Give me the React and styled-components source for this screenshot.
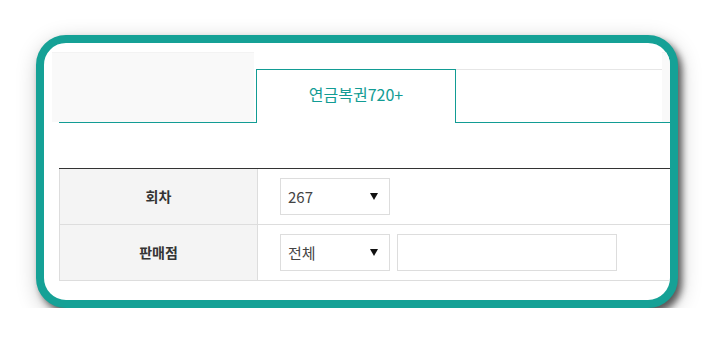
import React from "react";
import styled, { createGlobalStyle } from "styled-components";

const GlobalStyle = createGlobalStyle`
  html, body {
    margin: 0;
    padding: 0;
    background: #fff;
    font-family: "Noto Sans CJK KR", "Noto Sans", sans-serif;
  }
`;

const Page = styled.div`
  padding: 35px 0 0 36px;
`;

const Frame = styled.div`
  box-sizing: border-box;
  width: 642px;
  height: 273px;
  border: 8px solid #15a196;
  border-radius: 30px;
  background: #fff;
  overflow: hidden;
  box-shadow: 4px 5px 7px rgba(0, 0, 0, 0.6), 2px 6px 22px rgba(0, 0, 0, 0.22);
`;

const Inner = styled.div`
  width: 720px;
  padding: 9px 0 0 15px;
`;

const TabList = styled.ul`
  display: flex;
  align-items: flex-end;
  height: 70px;
  margin: 0;
  padding: 0;
  list-style: none;
  border-bottom: 1px solid #129c94;
`;

const Tab = styled.li`
  box-sizing: border-box;
  flex: none;
  display: flex;
  align-items: center;
  justify-content: center;
  padding-bottom: 5px;
  font-size: 16px;
  color: ${(p) => (p.$active ? "#129c94" : "#666")};
  background: ${(p) => (p.$muted ? "#f9f9f9" : "#fff")};
  ${(p) =>
    p.$active
      ? `
    height: 54px;
    margin-bottom: -1px;
    border: 1px solid #129c94;
    border-bottom: none;
  `
      : p.$muted
      ? `
    height: 70px;
    border-top: 1px solid #f3f3f3;
  `
      : `
    height: 53px;
    border-top: 1px solid #e6e6e6;
  `}
`;

const FormTable = styled.div`
  margin-top: 45px;
  border-top: 1px solid #333;
`;

const Row = styled.div`
  display: flex;
  height: 56px;
  box-sizing: border-box;
  border-bottom: 1px solid #ddd;
`;

const Label = styled.div`
  box-sizing: border-box;
  width: 199px;
  display: flex;
  align-items: center;
  justify-content: center;
  padding-bottom: 2px;
  background: #f4f4f4;
  border-left: 1px solid #ddd;
  border-right: 1px solid #ddd;
  font-size: 14px;
  font-weight: 700;
  color: #333;
`;

const Cell = styled.div`
  display: flex;
  align-items: center;
  gap: 7px;
  padding-left: 22px;
`;

const Select = styled.div`
  box-sizing: border-box;
  width: 110px;
  height: 37px;
  display: flex;
  align-items: center;
  justify-content: space-between;
  padding: 0 11px 0 7px;
  border: 1px solid #ddd;
  background: #fff;
  font-size: 15px;
  color: #444;
`;

const Input = styled.input`
  box-sizing: border-box;
  width: 220px;
  height: 37px;
  border: 1px solid #ddd;
  outline: none;
  background: #fff;
  font-size: 15px;
`;

const Arrow = () => (
  <svg width="8" height="7" viewBox="0 0 8 7">
    <polygon points="0,0 8,0 4,7" fill="#111" />
  </svg>
);

export default function App() {
  return (
    <>
      <GlobalStyle />
      <Page>
        <Frame>
          <Inner>
            <TabList>
              <Tab $muted style={{ width: 202, marginLeft: -7, marginRight: 2 }} />
              <Tab $active style={{ width: 200 }}>연금복권720+</Tab>
              <Tab style={{ width: 206 }} />
              <Tab $muted style={{ width: 200 }} />
            </TabList>
            <FormTable>
              <Row>
                <Label>회차</Label>
                <Cell>
                  <Select>
                    267
                    <Arrow />
                  </Select>
                </Cell>
              </Row>
              <Row>
                <Label>판매점</Label>
                <Cell>
                  <Select>
                    전체
                    <Arrow />
                  </Select>
                  <Input type="text" />
                </Cell>
              </Row>
            </FormTable>
          </Inner>
        </Frame>
      </Page>
    </>
  );
}
